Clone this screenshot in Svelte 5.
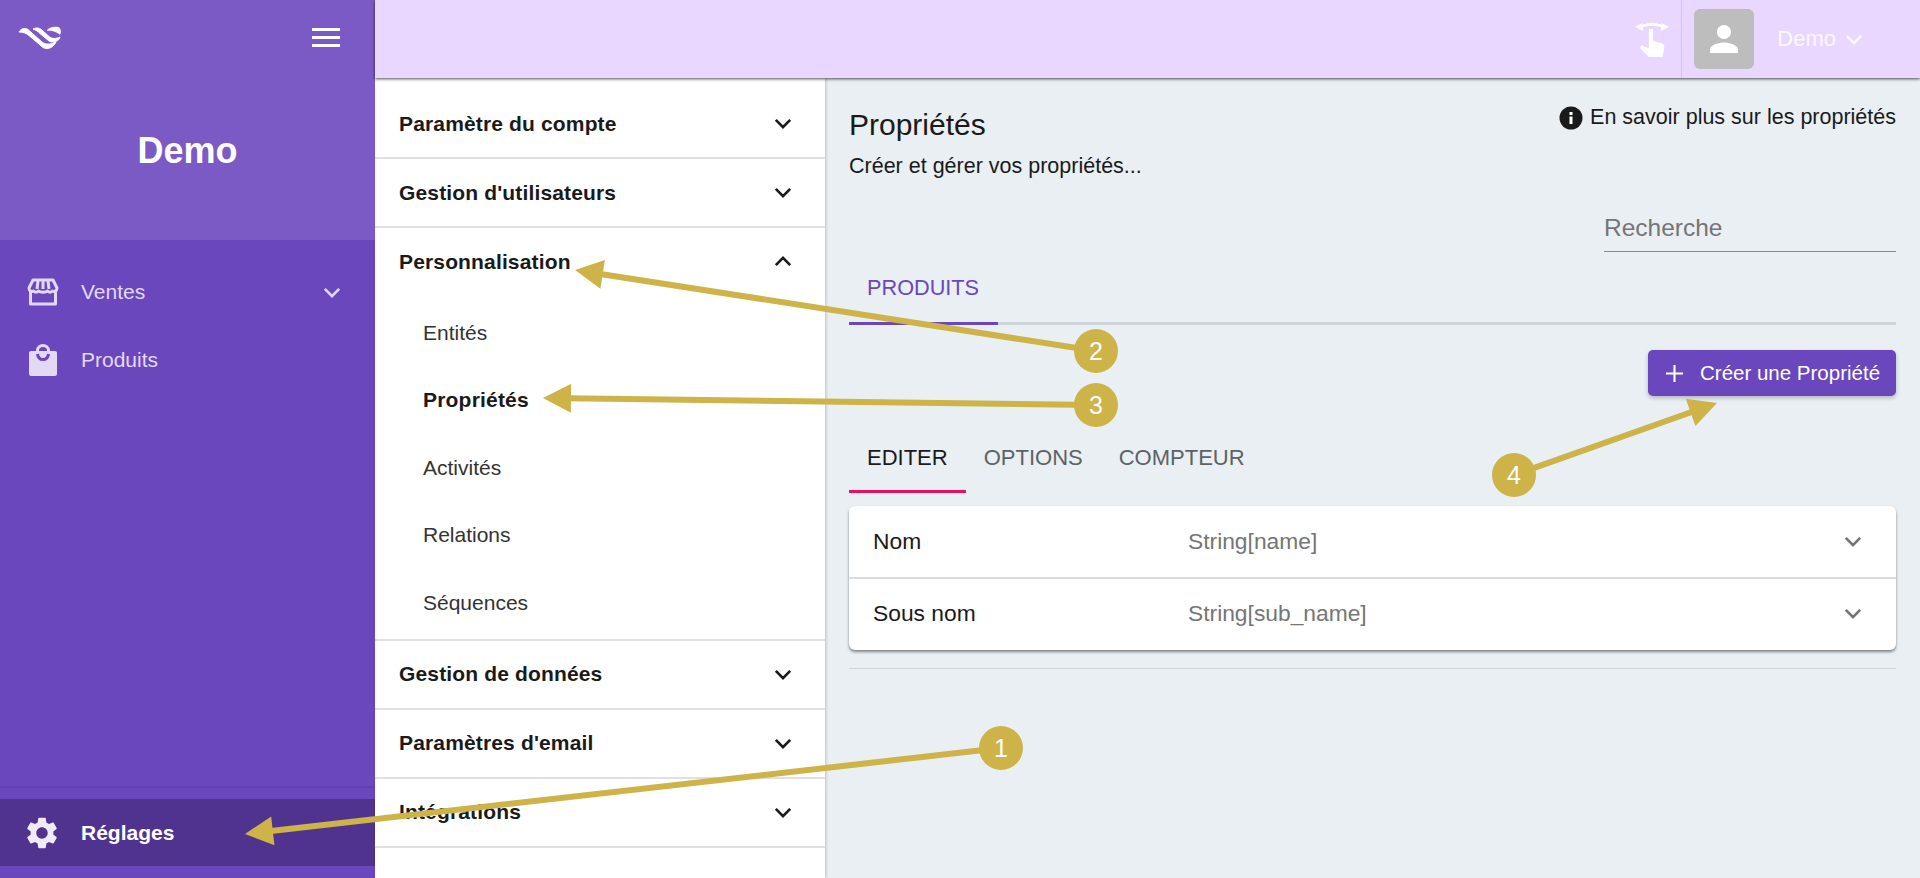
<script>
  const sections = [
    { label: 'Paramètre du compte' },
    { label: "Gestion d'utilisateurs" },
    { label: 'Personnalisation', open: true, items: ['Entités', 'Propriétés', 'Activités', 'Relations', 'Séquences'] },
    { label: 'Gestion de données' },
    { label: "Paramètres d'email" },
    { label: 'Intégrations' }
  ];
  const fields = [
    { name: 'Nom', type: 'String[name]' },
    { name: 'Sous nom', type: 'String[sub_name]' }
  ];
  // annotation arrows: line start, tip, and the badge sitting on the start
  const notes = [
    { n: 1, x: 1001, y: 748, tx: 245, ty: 834 },
    { n: 2, x: 1096, y: 351, tx: 575, ty: 270 },
    { n: 3, x: 1096, y: 405, tx: 543, ty: 398 },
    { n: 4, x: 1514, y: 475, tx: 1717, ty: 403 }
  ];
  function unit(a) {
    const dx = a.x - a.tx, dy = a.y - a.ty;
    const len = Math.hypot(dx, dy);
    return [dx / len, dy / len];
  }
  function head(a) {
    const [ux, uy] = unit(a);
    const bx = a.tx + ux * 28, by = a.ty + uy * 28;
    return `${a.tx},${a.ty} ${bx - uy * 14.5},${by + ux * 14.5} ${bx + uy * 14.5},${by - ux * 14.5}`;
  }
  function neck(a) {
    const [ux, uy] = unit(a);
    return { x: a.tx + ux * 24, y: a.ty + uy * 24 };
  }
</script>

<div class="page">
  <aside class="sidebar">
    <div class="brand">
      <div class="brand-top">
        <svg class="logo" viewBox="0 0 44 24" width="44" height="24">
          <path d="M1 6C3 2.500 7 1.500 10 3.500L24 16C27 18.500 32 19 38 16C35 22 29 24 25 21.500L11 9.500C8 7 5 6 1 6Z" fill="#fff" stroke="#fff"/>
          <path d="M15 3C19 1 22 2 25 5L31 10.500C34 13 38 13 42 11C41 15.500 35 17.500 31 15L22 7.500C20 5.500 18 4 15 3Z" fill="#fff" stroke="#fff"/>
          <path d="M29 4.500C32 1 37 .5 41 1.500C43 3.500 43 6 42 8.500C38 5 33 4 29 4.500Z" fill="#fff" stroke="#fff" stroke-width=".5"/>
        </svg>
        <svg viewBox="0 0 28 20" width="28" height="20" class="burger">
          <path d="M0 1.500H28M0 9.500H28M0 17.500H28" stroke="#fff" stroke-width="3"/>
        </svg>
      </div>
      <div class="brand-name">Demo</div>
    </div>
    <nav class="side-nav">
      <div class="side-item">
        <svg class="side-icon" viewBox="0 0 32 28" width="32" height="28">
          <path d="M6 2H26L30 10C30 13 27 14 25.500 13C24 14.500 22 14.500 20.500 13C19 14.500 13 14.500 11.500 13C10 14.500 8 14.500 6.500 13C5 14 2 13 2 10Z" fill="none" stroke="#e3d9f5" stroke-width="3" stroke-linejoin="round"/>
          <path d="M11 3L10 11M16 3V11M21 3L22 11" stroke="#e3d9f5" stroke-width="3"/>
          <path d="M3.500 13V26H28.500V13" fill="none" stroke="#e3d9f5" stroke-width="3" stroke-linejoin="round"/>
        </svg>
        <span>Ventes</span>
        <svg class="side-chevron" viewBox="0 0 20 12" width="18" height="11"><path d="M2 2L10 10L18 2" fill="none" stroke="#e3d9f5" stroke-width="3"/></svg>
      </div>
      <div class="side-item">
        <svg class="side-icon" viewBox="0 0 28 32" width="28" height="32">
          <path d="M2 7H26C27 7 28 7.800 28 8.500V30C28 31 27 32 26 32H2C1 32 0 31 0 30V8.500C0 7.800 1 7 2 7Z" fill="#e3d9f5"/>
          <path d="M8.500 10V6.500C8.500 3.500 11 1.500 14 1.500C17 1.500 19.500 3.500 19.500 6.500V10" fill="none" stroke="#e3d9f5" stroke-width="3"/>
          <path d="M8.500 10C9 14 11 15.500 14 15.500C17 15.500 19 14 19.500 10" fill="none" stroke="#6a47bd" stroke-width="3"/>
        </svg>
        <span>Produits</span>
      </div>
    </nav>
    <div class="side-bottom">
      <div class="side-item active">
        <svg class="gear" viewBox="0 0 24 24" width="38" height="38">
          <path fill="#f0eafa" d="M19.140 12.940c.04-.3.060-.61.060-.94 0-.32-.02-.64-.07-.94l2.030-1.580c.18-.14.230-.41.120-.61l-1.920-3.320c-.12-.22-.37-.29-.59-.22l-2.390.96c-.5-.38-1.030-.7-1.620-.94l-.36-2.540c-.04-.24-.24-.41-.48-.41h-3.840c-.24 0-.43.170-.47.410l-.36 2.540c-.59.240-1.130.57-1.620.94l-2.390-.96c-.22-.08-.47 0-.59.220L2.740 8.870c-.12.210-.08.470.12.610l2.030 1.580c-.05.300-.09.630-.09.940s.02.640.07.940l-2.030 1.580c-.18.140-.23.410-.12.610l1.920 3.320c.12.220.37.290.59.220l2.390-.96c.5.380 1.030.7 1.620.94l.36 2.540c.05.240.24.410.48.410h3.840c.24 0 .44-.17.470-.41l.36-2.540c.59-.24 1.130-.56 1.620-.94l2.390.96c.22.080.47 0 .59-.22l1.920-3.320c.12-.22.070-.47-.12-.61l-2.010-1.580zM12 15.600c-1.980 0-3.600-1.620-3.600-3.600s1.620-3.600 3.600-3.600 3.600 1.620 3.600 3.600-1.620 3.600-3.600 3.600z"/>
        </svg>
        <span>Réglages</span>
      </div>
    </div>
  </aside>

  <div class="main">
    <header class="topbar">
      <svg class="rotate-icon" viewBox="0 0 32 34" width="34" height="36">
        <path d="M4 6.500C10 2 22 2 28 6.500" fill="none" stroke="#fff" stroke-width="2.500"/>
        <path d="M0 5.500L7 2L7.500 9.500ZM32 5.500L25 2L24.500 9.500Z" fill="#fff"/>
        <path d="M13 7.500H17V19L25 21C27 21.500 28 23 27.500 25L26 34H13L5 26C4 24 6 22.500 8 23.500L13 26Z" fill="#fff"/>
      </svg>
      <div class="topbar-user">
        <div class="avatar">
          <svg viewBox="0 0 24 24" width="42" height="42"><path fill="#fff" d="M12 12c2.210 0 4-1.790 4-4s-1.790-4-4-4-4 1.790-4 4 1.790 4 4 4zm0 2c-2.670 0-8 1.340-8 4v2h16v-2c0-2.660-5.330-4-8-4z"/></svg>
        </div>
        <span class="user-name">Demo</span>
        <svg viewBox="0 0 20 12" width="18" height="11"><path d="M2 2L10 10L18 2" fill="none" stroke="#fbf7ff" stroke-width="3"/></svg>
      </div>
    </header>

    <div class="body">
      <div class="settings-nav">
        {#each sections as s}
          <div class="section">
            <div class="section-head">
              <span>{s.label}</span>
              <svg class:flip={s.open} viewBox="0 0 20 12" width="18" height="11"><path d="M2 2L10 10L18 2" fill="none" stroke="#1a1a1a" stroke-width="3"/></svg>
            </div>
            {#if s.items}
              <div class="section-items">
                {#each s.items as item}
                  <div class="section-item" class:current={item === 'Propriétés'}>{item}</div>
                {/each}
              </div>
            {/if}
          </div>
        {/each}
      </div>

      <main class="content">
        <div class="title-row">
          <div>
            <h1>Propriétés</h1>
            <p>Créer et gérer vos propriétés...</p>
          </div>
          <div class="learn">
            <svg viewBox="0 0 24 24" width="24" height="24"><circle cx="12" cy="12" r="11.500" fill="#1a1a1a"/><path d="M10.500 10.500h3V18h-3zM10.500 6h3v3h-3z" fill="#fff"/></svg>
            <span>En savoir plus sur les propriétés</span>
          </div>
        </div>
        <div class="search"><span>Recherche</span></div>
        <div class="tabs">
          <div class="tab">PRODUITS</div>
        </div>
        <div class="actions">
          <button class="create">
            <svg viewBox="0 0 16 16" width="17" height="17"><path d="M8 0V16M0 8H16" stroke="#fff" stroke-width="2"/></svg>
            <span>Créer une Propriété</span>
          </button>
        </div>
        <div class="subtabs">
          <div class="subtab on">EDITER</div>
          <div class="subtab">OPTIONS</div>
          <div class="subtab">COMPTEUR</div>
        </div>
        <div class="card">
          {#each fields as f}
            <div class="field">
              <span class="field-name">{f.name}</span>
              <span class="field-type">{f.type}</span>
              <svg viewBox="0 0 20 12" width="18" height="11"><path d="M2 2L10 10L18 2" fill="none" stroke="#757575" stroke-width="3"/></svg>
            </div>
          {/each}
        </div>
        <div class="rule"></div>
      </main>
    </div>
  </div>

  <svg class="notes" viewBox="0 0 1920 878" width="1920" height="878">
    {#each notes as a}
      <line x1={a.x} y1={a.y} x2={neck(a).x} y2={neck(a).y} stroke="#cdb348" stroke-width="6"/>
      <polygon points={head(a)} fill="#cdb348"/>
      <circle cx={a.x} cy={a.y} r="22" fill="#cdb348"/>
      <text x={a.x} y={a.y + 9} text-anchor="middle">{a.n}</text>
    {/each}
  </svg>
</div>

<style>
  :global(body) {
    margin: 0;
    font-family: "Liberation Sans", Arial, sans-serif;
  }
  .page {
    position: relative;
    display: flex;
    width: 1920px;
    height: 878px;
    overflow: hidden;
    background: #e9eff3;
    color: #1a1a1a;
  }
  .sidebar {
    width: 375px;
    flex: none;
    display: flex;
    flex-direction: column;
    background: #6a47bd;
    color: #e3d9f5;
  }
  .brand {
    height: 240px;
    background: #7b5ac6;
    box-sizing: border-box;
    padding-top: 26px;
  }
  .brand-top {
    display: flex;
    justify-content: space-between;
    align-items: center;
    height: 24px;
    padding: 0 35px 0 18px;
  }
  .brand-name {
    margin-top: 80px;
    text-align: center;
    font-size: 36px;
    font-weight: 700;
    color: #fff;
  }
  .side-nav {
    flex: 1;
    padding-top: 18px;
  }
  .side-item {
    position: relative;
    display: flex;
    align-items: center;
    height: 68px;
    font-size: 21px;
    padding-left: 26px;
  }
  .side-icon {
    width: 34px;
    margin-right: 21px;
    flex: none;
  }
  .gear {
    flex: none;
    margin: 0 20px 0 -3px;
  }
  .side-chevron {
    position: absolute;
    right: 34px;
  }
  .side-bottom {
    border-top: 2px solid #6340b0;
    padding: 11px 0 12px;
  }
  .active {
    height: 67px;
    background: #50338f;
    color: #fff;
    font-weight: 700;
  }
  .main {
    flex: 1;
    display: flex;
    flex-direction: column;
    min-width: 0;
  }
  .topbar {
    height: 78px;
    flex: none;
    background: #e9d7ff;
    box-shadow: 0 1px 3px rgba(0, 0, 0, 0.7);
    display: flex;
    justify-content: flex-end;
    align-items: center;
    position: relative;
    z-index: 2;
  }
  .rotate-icon {
    margin-right: 12px;
  }
  .topbar-user {
    display: flex;
    align-items: center;
    height: 78px;
    border-left: 1px solid #d5c2ea;
    padding: 0 57px 0 12px;
  }
  .avatar {
    width: 60px;
    height: 60px;
    border-radius: 6px;
    background: #bdbdbd;
    display: flex;
    align-items: center;
    justify-content: center;
    margin-right: 23px;
  }
  .user-name {
    font-size: 22px;
    color: #fbf7ff;
    margin-right: 9px;
  }
  .body {
    flex: 1;
    display: flex;
    min-height: 0;
  }
  .settings-nav {
    width: 450px;
    flex: none;
    background: #fff;
    padding-top: 12px;
    box-shadow: 1px 0 3px rgba(0, 0, 0, 0.2);
    z-index: 1;
  }
  .section {
    border-bottom: 2px solid #e0e0e0;
  }
  .section-head {
    height: 67px;
    padding: 0 33px 0 24px;
    display: flex;
    align-items: center;
    justify-content: space-between;
    font-size: 21px;
    font-weight: 700;
    letter-spacing: 0.15px;
  }
  .flip {
    transform: rotate(180deg);
  }
  .section-items {
    padding: 4px 0 2px;
  }
  .section-item {
    height: 67.500px;
    padding-left: 48px;
    display: flex;
    align-items: center;
    font-size: 21px;
    color: #333;
  }
  .current {
    font-weight: 700;
    color: #1a1a1a;
    letter-spacing: 0.2px;
  }
  .content {
    flex: 1;
    min-width: 0;
    padding: 29px 24px 0 24px;
  }
  .title-row {
    display: flex;
    justify-content: space-between;
    align-items: flex-start;
  }
  h1 {
    margin: 0;
    font-size: 30px;
    font-weight: 400;
    line-height: 36px;
  }
  .title-row p {
    margin: 11px 0 0;
    font-size: 21.500px;
    line-height: 24px;
  }
  .learn {
    display: flex;
    align-items: center;
    gap: 7px;
    font-size: 21.500px;
    margin-top: -2px;
  }
  .search {
    width: 292px;
    margin: 36px 0 0 auto;
    height: 38px;
    box-sizing: border-box;
    border-bottom: 1px solid #8a8a8a;
    font-size: 24.500px;
    color: #757575;
  }
  .tabs {
    border-bottom: 3px solid #ced4d9;
    height: 73px;
    box-sizing: border-box;
  }
  .tab {
    width: 149px;
    height: 73px;
    box-sizing: border-box;
    padding: 23px 0 0 18px;
    border-bottom: 3px solid #6a47bd;
    color: #6a47bd;
    font-size: 21.700px;
  }
  .actions {
    display: flex;
    justify-content: flex-end;
    margin-top: 25px;
  }
  .create {
    width: 248px;
    height: 46px;
    border: 0;
    border-radius: 5px;
    background: #6a47bd;
    color: #fff;
    font: inherit;
    font-size: 20.500px;
    display: flex;
    align-items: center;
    gap: 17px;
    padding: 0 0 0 18px;
    box-shadow: 0 2px 4px rgba(0, 0, 0, 0.25);
  }
  .subtabs {
    display: flex;
    margin-top: 24px;
    height: 73px;
    box-sizing: border-box;
  }
  .subtab {
    height: 73px;
    box-sizing: border-box;
    padding: 25px 18px 0;
    font-size: 22px;
    color: #5c6266;
  }
  .on {
    color: #1a1a1a;
    border-bottom: 3px solid #e60f64;
  }
  .card {
    margin-top: 13px;
    background: #fff;
    border-radius: 6px;
    box-shadow: 0 2px 3px rgba(0, 0, 0, 0.45);
  }
  .field {
    height: 71px;
    display: flex;
    align-items: center;
    padding: 0 34px 0 24px;
    font-size: 22.800px;
  }
  .field + .field {
    border-top: 2px solid #dcdcdc;
    padding-bottom: 2px;
    box-sizing: border-box;
    height: 73px;
  }
  .field-name {
    width: 315px;
  }
  .field-type {
    flex: 1;
    color: #757575;
  }
  .rule {
    margin-top: 18px;
    border-top: 1px solid #cfd5da;
  }
  .notes {
    position: absolute;
    left: 0;
    top: 0;
    pointer-events: none;
    z-index: 5;
  }
  .notes text {
    fill: #fff;
    font-family: "Liberation Sans", sans-serif;
    font-size: 25px;
  }
</style>
